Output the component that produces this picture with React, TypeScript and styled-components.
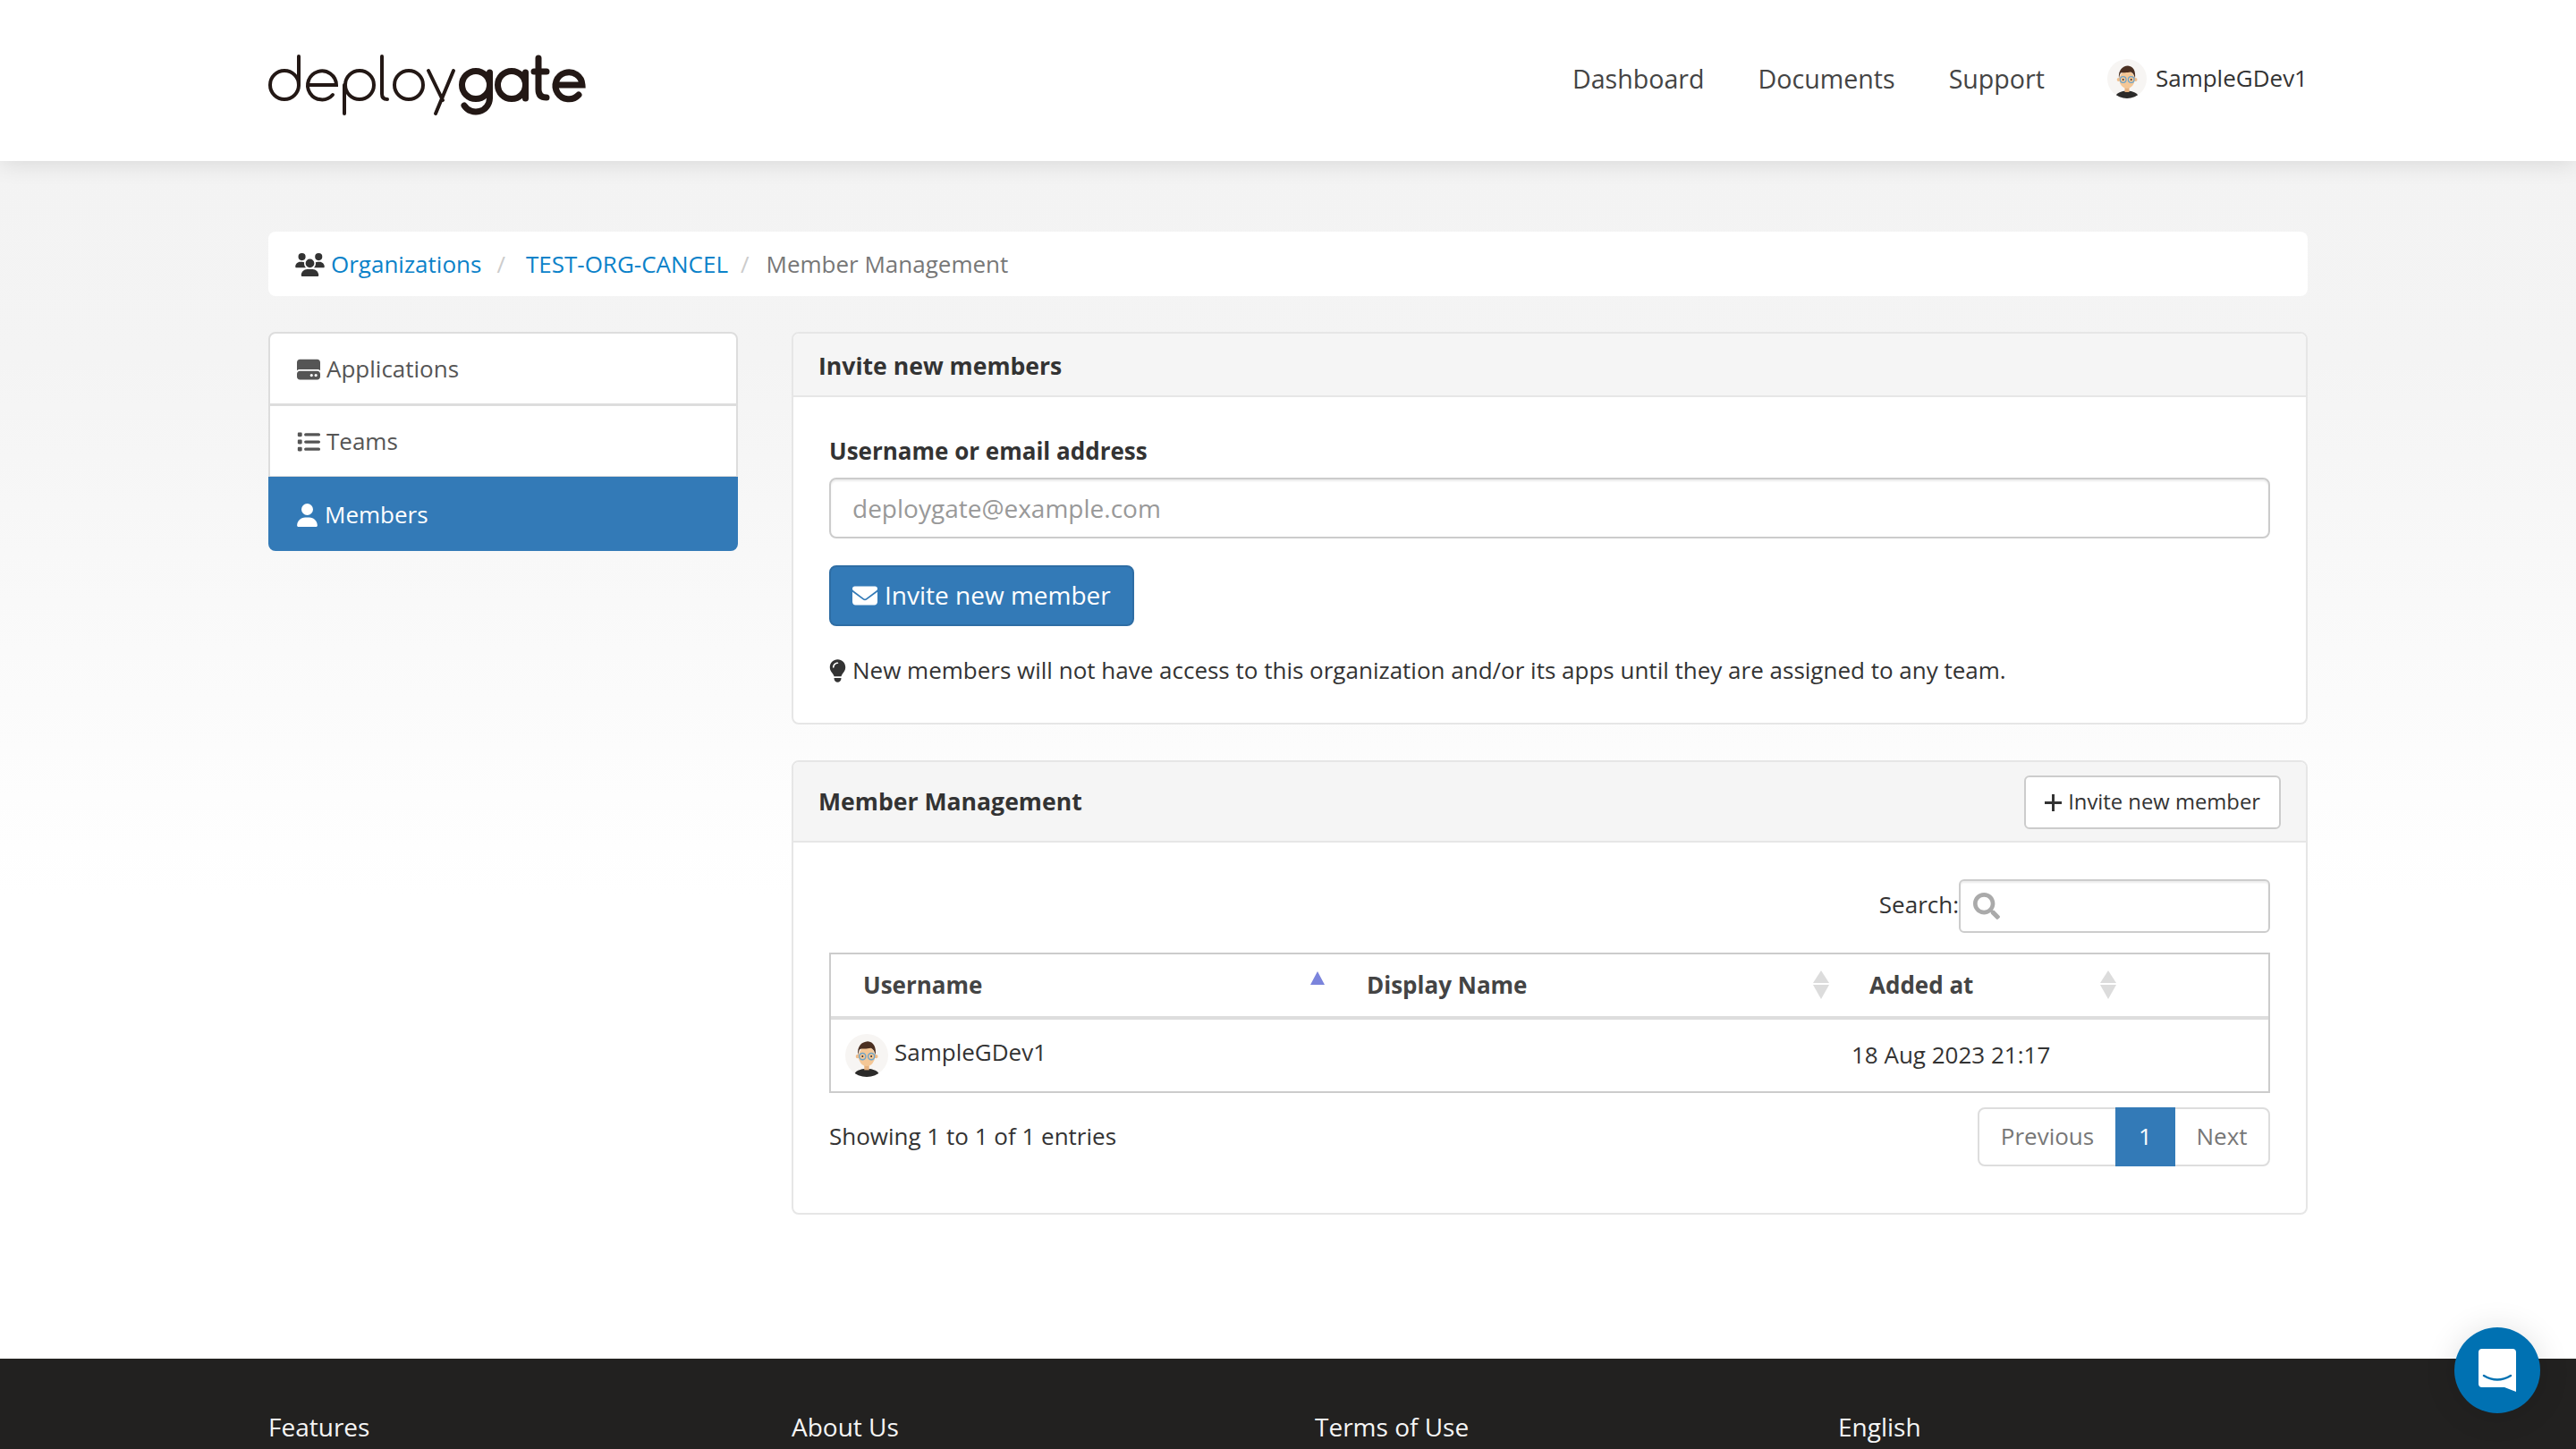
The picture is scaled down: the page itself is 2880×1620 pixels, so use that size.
import React from "react";
import styled, { createGlobalStyle } from "styled-components";
import { FaSearch } from "react-icons/fa";
import { FaEnvelope, FaHardDrive, FaLightbulb, FaList, FaUser, FaUsers } from "react-icons/fa6";

const GlobalStyle = createGlobalStyle`
  html, body {
    margin: 0;
    padding: 0;
    overflow: hidden;
    height: 1620px;
  }
  body {
    font-family: "Open Sans", "Noto Sans", sans-serif;
    font-size: 26px;
    line-height: 1.42857;
    color: #333;
    background: linear-gradient(#f3f3f3 180px, #f4f4f4 400px, #ffffff 1000px);
  }
  * {
    box-sizing: border-box;
  }
`;

const Container = styled.div`
  width: 2280px;
  margin: 0 auto;
`;

const Header = styled.header`
  height: 180px;
  background: #fff;
  box-shadow: 0 4px 24px rgba(0, 0, 0, 0.1);
  position: relative;
`;

const HeaderInner = styled(Container)`
  height: 100%;
  display: flex;
  align-items: center;
  justify-content: space-between;
`;

const LogoSvg = styled.svg`
  width: 370px;
  height: 90px;
  margin-top: 10px;
`;

const Nav = styled.nav`
  display: flex;
  align-items: center;
  margin-top: -4px;
`;

const NavLink = styled.a`
  font-size: 28.6px;
  color: #444;
  margin-right: 60px;
`;

const NavUser = styled.a`
  display: flex;
  align-items: center;
  gap: 10px;
  margin-left: 10px;
  color: #333;
  font-size: 26px;
`;

const AvatarSvg = styled.svg<{ $size: number }>`
  width: ${(p) => p.$size}px;
  height: ${(p) => p.$size}px;
  flex: none;
`;

const Main = styled(Container)`
  padding: 79px 0 161px;
`;

const Breadcrumb = styled.ol`
  list-style: none;
  margin: 0 0 40px;
  padding: 2px 30px 0;
  height: 72px;
  display: flex;
  align-items: center;
  background: #fff;
  border-radius: 8px;
`;

const Crumb = styled.li<{ $tight?: boolean }>`
  display: flex;
  align-items: center;
  color: #777;
  &:not(:first-child)::before {
    content: "/";
    color: #ccc;
    padding: ${(p) => (p.$tight ? "0 19px 0 14px" : "0 23px 0 17px")};
  }
`;

const CrumbLink = styled.a`
  color: #0b82c9;
  display: flex;
  align-items: center;
  gap: 7px;
  svg {
    color: #333;
    width: 33px;
    height: 26px;
  }
`;

const Columns = styled.div`
  display: grid;
  grid-template-columns: 525px 1695px;
  column-gap: 60px;
  align-items: start;
`;

const SideList = styled.ul`
  list-style: none;
  margin: 0;
  padding: 0;
`;

const SideItem = styled.li<{ $active?: boolean }>`
  height: 82px;
  display: flex;
  align-items: center;
  gap: ${(p) => (p.$active ? 8 : 7)}px;
  padding: 2px 0 0 30px;
  color: ${(p) => (p.$active ? "#fff" : "#555")};
  background: ${(p) => (p.$active ? "#337ab7" : "#fff")};
  border: 2px solid ${(p) => (p.$active ? "#337ab7" : "#ddd")};
  margin-bottom: -1px;
  &:first-child {
    border-radius: 8px 8px 0 0;
  }
  &:last-child {
    height: 83px;
    border-radius: 0 0 8px 8px;
    margin-bottom: 0;
  }
  svg {
    width: ${(p) => (p.$active ? 23 : 26)}px;
    height: 26px;
    flex: none;
  }
`;

const Panel = styled.section`
  background: #fff;
  border: 2px solid #e6e6e6;
  border-radius: 8px;
  & + & {
    margin-top: 40px;
  }
`;

const PanelHeading = styled.div<{ $tall?: boolean }>`
  height: ${(p) => (p.$tall ? 90 : 71)}px;
  padding: ${(p) => (p.$tall ? "2px 28px 0" : "4px 28px 0")};
  display: flex;
  align-items: center;
  justify-content: space-between;
  background: #f5f5f5;
  border-bottom: 2px solid #e6e6e6;
  border-radius: 6px 6px 0 0;
`;

const PanelTitle = styled.h3`
  margin: 0;
  font-size: 26.6px;
  font-weight: 700;
  color: #333;
`;

const PanelBody = styled.div`
  padding: 41px 40px 0;
`;

const InvitePanelBody = styled(PanelBody)`
  height: 364px;
  padding-top: 42px;
`;

const FieldLabel = styled.label`
  display: block;
  font-weight: 700;
  height: 48px;
  line-height: 36px;
`;

const TextInput = styled.input`
  display: block;
  width: 100%;
  height: 68px;
  padding: 0 24px;
  font: inherit;
  font-size: 28px;
  color: #555;
  background: #fff;
  border: 2px solid #ccc;
  border-radius: 8px;
  box-shadow: inset 0 2px 2px rgba(0, 0, 0, 0.075);
  &::placeholder {
    color: #999;
  }
`;

const PrimaryButton = styled.button`
  display: flex;
  align-items: center;
  gap: 8px;
  margin-top: 30px;
  height: 68px;
  padding: 0 24px;
  font: inherit;
  font-size: 28px;
  color: #fff;
  background: #337ab7;
  border: 2px solid #2e6da4;
  border-radius: 8px;
  svg {
    width: 28px;
    height: 28px;
  }
`;

const Hint = styled.p`
  margin: 31px 0 0;
  display: flex;
  align-items: center;
  gap: 7px;
  svg {
    width: 19px;
    height: 26px;
    flex: none;
  }
`;

const OutlineButton = styled.button`
  display: flex;
  align-items: center;
  gap: 7px;
  height: 60px;
  padding: 0 21px;
  font: inherit;
  font-size: 23.8px;
  color: #333;
  background: #fff;
  border: 2px solid #ccc;
  border-radius: 6px;
`;

const MemberBody = styled(PanelBody)`
  height: 414px;
`;

const SearchRow = styled.div`
  display: flex;
  justify-content: flex-end;
  align-items: center;
  height: 60px;
`;

const SearchLabel = styled.span`
  margin-top: -2px;
`;

const SearchBox = styled.div`
  width: 348px;
  height: 60px;
  display: flex;
  align-items: center;
  padding-left: 14px;
  border: 2px solid #ccc;
  border-radius: 6px;
  box-shadow: inset 0 2px 2px rgba(0, 0, 0, 0.075);
  svg {
    color: #aaa;
    width: 30px;
    height: 30px;
  }
`;

const SearchField = styled.input`
  flex: 1;
  min-width: 0;
  border: 0;
  outline: 0;
  background: transparent;
  font: inherit;
`;

const Table = styled.table`
  width: 100%;
  margin-top: 22px;
  table-layout: fixed;
  border-collapse: separate;
  border-spacing: 0;
  border: 2px solid #ccc;
`;

const Th = styled.th`
  height: 73px;
  padding: 0 9px 0 36px;
  text-align: left;
  font-weight: 700;
  color: #444;
  border-bottom: 4px solid #ddd;
`;

const ThInner = styled.div`
  display: flex;
  justify-content: space-between;
  align-items: center;
`;

const Td = styled.td`
  height: 80px;
  padding: 0 16px;
`;

const UserCell = styled.div`
  display: flex;
  align-items: center;
  gap: 7px;
`;

const UserCellName = styled.span`
  margin-top: -6px;
`;

const TableFooter = styled.div`
  display: flex;
  justify-content: space-between;
  align-items: center;
  margin-top: 16px;
`;

const Pagination = styled.div`
  display: flex;
  height: 66px;
  border: 2px solid #ddd;
  border-radius: 8px;
`;

const PageItem = styled.a<{ $active?: boolean; $width: number }>`
  width: ${(p) => p.$width}px;
  display: flex;
  align-items: center;
  justify-content: center;
  color: ${(p) => (p.$active ? "#fff" : "#777")};
  background: ${(p) => (p.$active ? "#337ab7" : "transparent")};
  margin: ${(p) => (p.$active ? "-2px 0" : "0")};
`;

const Footer = styled.footer`
  height: 101px;
  overflow: hidden;
  background: #222120;
  color: #f5f5f5;
  padding-top: 56px;
`;

const FooterGrid = styled(Container)`
  display: grid;
  grid-template-columns: repeat(4, 585px);
  font-size: 28px;
  line-height: 40px;
`;

const ChatBubble = styled.button`
  position: fixed;
  right: 40px;
  bottom: 40px;
  width: 96px;
  height: 96px;
  padding: 0;
  border: 0;
  border-radius: 50%;
  background: #0071b2;
  box-shadow: 0 2px 36px rgba(0, 0, 0, 0.12);
  svg {
    display: block;
    width: 96px;
    height: 96px;
  }
`;

const Logo = () => (
  <LogoSvg viewBox="10 0 370 90" role="img" aria-label="deploygate">
    <g fill="none" stroke="#231815" strokeWidth="4" strokeLinecap="round">
      <circle cx="28" cy="45" r="16" />
      <path d="M44 13V45" />
      <path d="M54 45H86A16 16 0 1 0 82 56" />
      <circle cx="112" cy="45" r="16" />
      <path d="M95 45V77" />
      <path d="M137 13V55Q137 61 143 61" />
      <circle cx="167" cy="45" r="16" />
      <path d="M189 29L205 62M217 29L197 77" />
    </g>
    <g fill="none" stroke="#231815" strokeWidth="7" strokeLinecap="round">
      <circle cx="242" cy="45" r="15.500" />
      <path d="M257.500 31V60A15.500 15.500 0 0 1 229 68" />
      <circle cx="282" cy="45" r="15.500" />
      <path d="M297.500 31V60" />
      <path d="M312 15V50Q312 59 321 59M307 30H321" />
      <path d="M331 45H361A15 15 0 1 0 357 56" />
    </g>
  </LogoSvg>
);

const Avatar = ({ size, id }: { size: number; id: string }) => (
  <AvatarSvg $size={size} viewBox="0 0 44 44">
    <defs>
      <clipPath id={id}>
        <circle cx="22" cy="22" r="22" />
      </clipPath>
    </defs>
    <circle cx="22" cy="22" r="22" fill="#f7f5f3" />
    <g clipPath={`url(#${id})`}>
      <ellipse cx="22" cy="42" rx="12.500" ry="6.500" fill="#2b2a29" />
      <rect x="19.500" y="29" width="5" height="8" fill="#e6b27f" />
      <circle cx="12.700" cy="23" r="2" fill="#f0bd8a" />
      <circle cx="31.500" cy="23" r="2" fill="#f0bd8a" />
      <ellipse cx="22" cy="23" rx="8.500" ry="10" fill="#f4c796" />
      <path d="M13 22C12 12 17 8 23 7.500C29 8 32 13 31 22C30 17 28 15 26 14.500C22 15.500 17 15 15 15.500C14 17 13.500 19 13 22Z" fill="#4b3022" />
      <g fill="none" stroke="#6fa5c9" strokeWidth="1.300">
        <circle cx="17.700" cy="23" r="3.300" />
        <circle cx="26.700" cy="23" r="3.300" />
      </g>
      <circle cx="17.700" cy="23" r="0.900" fill="#3a2a20" />
      <circle cx="26.700" cy="23" r="0.900" fill="#3a2a20" />
    </g>
  </AvatarSvg>
);

const SortIcon = styled.svg`
  width: 18px;
  height: 32px;
  flex: none;
`;

const SortArrows = ({ active }: { active?: boolean }) => (
  <SortIcon viewBox="0 0 18 32">
    {active ? (
      <path d="M8 1L16 16H0Z" fill="#7b84dc" />
    ) : (
      <>
        <path d="M9 0L18 14H0Z" fill="#dcdcdc" />
        <path d="M9 32L18 16H0Z" fill="#dcdcdc" />
      </>
    )}
  </SortIcon>
);

const PlusIcon = () => (
  <svg width="19" height="19" viewBox="0 0 19 19">
    <path d="M9.500 0V19M0 9.500H19" stroke="#333" strokeWidth="3" />
  </svg>
);

const App: React.FC = () => {
  return (
    <>
      <GlobalStyle />
      <Header>
        <HeaderInner>
          <Logo />
          <Nav>
            <NavLink>Dashboard</NavLink>
            <NavLink>Documents</NavLink>
            <NavLink>Support</NavLink>
            <NavUser>
              <Avatar size={44} id="nav-avatar" />
              <span>SampleGDev1</span>
            </NavUser>
          </Nav>
        </HeaderInner>
      </Header>

      <Main>
        <Breadcrumb>
          <Crumb>
            <CrumbLink>
              <FaUsers />
              Organizations
            </CrumbLink>
          </Crumb>
          <Crumb>
            <CrumbLink>TEST-ORG-CANCEL</CrumbLink>
          </Crumb>
          <Crumb $tight>Member Management</Crumb>
        </Breadcrumb>

        <Columns>
          <SideList>
            <SideItem>
              <FaHardDrive />
              Applications
            </SideItem>
            <SideItem>
              <FaList />
              Teams
            </SideItem>
            <SideItem $active>
              <FaUser />
              Members
            </SideItem>
          </SideList>

          <div>
            <Panel>
              <PanelHeading>
                <PanelTitle>Invite new members</PanelTitle>
              </PanelHeading>
              <InvitePanelBody>
                <FieldLabel>Username or email address</FieldLabel>
                <TextInput placeholder="deploygate@example.com" />
                <PrimaryButton>
                  <FaEnvelope />
                  Invite new member
                </PrimaryButton>
                <Hint>
                  <FaLightbulb />
                  New members will not have access to this organization and/or its apps until they are assigned to any team.
                </Hint>
              </InvitePanelBody>
            </Panel>

            <Panel>
              <PanelHeading $tall>
                <PanelTitle>Member Management</PanelTitle>
                <OutlineButton>
                  <PlusIcon />
                  Invite new member
                </OutlineButton>
              </PanelHeading>
              <MemberBody>
                <SearchRow>
                  <SearchLabel>Search:</SearchLabel>
                  <SearchBox>
                    <FaSearch />
                    <SearchField />
                  </SearchBox>
                </SearchRow>
                <Table>
                  <colgroup>
                    <col width="563" />
                    <col width="562" />
                    <col width="321" />
                    <col />
                  </colgroup>
                  <thead>
                    <tr>
                      <Th>
                        <ThInner>
                          Username
                          <SortArrows active />
                        </ThInner>
                      </Th>
                      <Th>
                        <ThInner>
                          Display Name
                          <SortArrows />
                        </ThInner>
                      </Th>
                      <Th>
                        <ThInner>
                          Added at
                          <SortArrows />
                        </ThInner>
                      </Th>
                      <Th />
                    </tr>
                  </thead>
                  <tbody>
                    <tr>
                      <Td>
                        <UserCell>
                          <Avatar size={48} id="row-avatar" />
                          <UserCellName>SampleGDev1</UserCellName>
                        </UserCell>
                      </Td>
                      <Td />
                      <Td>18 Aug 2023 21:17</Td>
                      <Td />
                    </tr>
                  </tbody>
                </Table>
                <TableFooter>
                  <span>Showing 1 to 1 of 1 entries</span>
                  <Pagination>
                    <PageItem $width={152}>Previous</PageItem>
                    <PageItem $active $width={67}>1</PageItem>
                    <PageItem $width={104}>Next</PageItem>
                  </Pagination>
                </TableFooter>
              </MemberBody>
            </Panel>
          </div>
        </Columns>
      </Main>

      <Footer>
        <FooterGrid>
          <div>Features</div>
          <div>About Us</div>
          <div>Terms of Use</div>
          <div>English</div>
        </FooterGrid>
      </Footer>

      <ChatBubble aria-label="Chat">
        <svg viewBox="0 0 96 96">
          <path d="M31 24H65A4 4 0 0 1 69 28V72L56 67H31A4 4 0 0 1 27 63V28A4 4 0 0 1 31 24Z" fill="#fff" />
          <path d="M33 54Q48 63 63 54" fill="none" stroke="#0071b2" strokeWidth="2.500" strokeLinecap="round" />
        </svg>
      </ChatBubble>
    </>
  );
};

export default App;
